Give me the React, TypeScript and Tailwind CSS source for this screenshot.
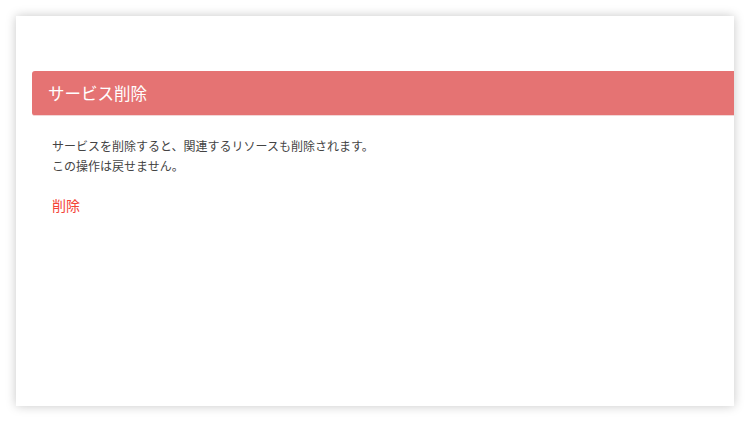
export default function App() {
  return (
    <div
      className="min-h-screen bg-white p-4"
      style={{ fontFamily: '"Noto Sans CJK JP", "Noto Sans", sans-serif' }}
    >
      <div className="h-[390px] overflow-hidden bg-white pl-4 pt-[55px] shadow-[0_0_10px_rgba(0,0,0,0.22)]">
        <div className="flex h-[45px] items-center rounded-l-[3px] border-b border-[#f3d6d6] bg-[#e57373] pl-4 pt-px text-[16.5px] text-white">
          サービス削除
        </div>
        <div className="pl-5 pt-5">
          <p className="text-[12px] leading-[20px] text-[#444]">
            サービスを削除すると、関連するリソースも削除されます。
            <br />
            この操作は戻せません。
          </p>
          <button className="mt-[19px] text-[14px] leading-[20px] text-[#f44336]">削除</button>
        </div>
      </div>
    </div>
  );
}
